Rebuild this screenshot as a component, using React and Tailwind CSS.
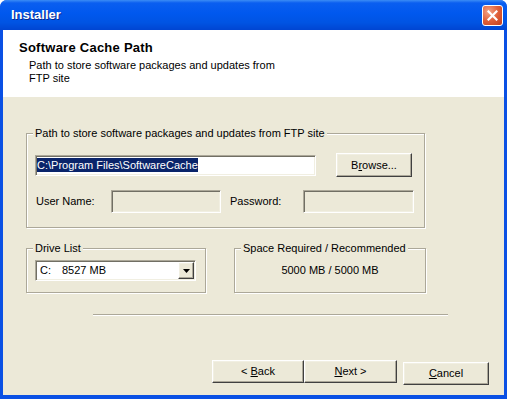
import React from 'react';

const raised =
  'flex items-center justify-center bg-[#ece9d8] border border-t-white border-l-white border-r-[#404040] border-b-[#404040] shadow-[inset_-1px_-1px_0_#aca899,inset_1px_1px_0_#f1efe2]';
const sunken =
  'border border-t-[#aca899] border-l-[#aca899] border-r-white border-b-white shadow-[inset_1px_1px_0_#716f64,inset_-1px_-1px_0_#f1efe2]';

function Group({ label, className = '', children }) {
  return (
    <div className={`relative border border-[#aca899] shadow-[inset_1px_1px_0_white,1px_1px_0_white] ${className}`}>
      <span className="absolute top-[-7px] left-[6px] px-[2px] bg-[#ece9d8] leading-[13px] whitespace-nowrap">
        {label}
      </span>
      {children}
    </div>
  );
}

function CloseButton() {
  return (
    <div className="w-[21px] h-[21px] rounded-[3px] border border-white bg-[radial-gradient(circle_at_30%_30%,#f3a588,#e0603a_50%,#c23e1c)] flex items-center justify-center">
      <svg width="11" height="11" viewBox="0 0 11 11">
        <path d="M1.5 1.5l8 8M9.5 1.5l-8 8" stroke="white" strokeWidth="2.2" strokeLinecap="square" />
      </svg>
    </div>
  );
}

export default function App() {
  return (
    <div className="w-[507px] h-[399px] bg-white font-['Liberation_Sans',Arial,sans-serif] text-[11px] text-black">
      <div className="w-full h-full flex flex-col rounded-t-[7px] bg-[#0a50e4]">
        {/* title bar */}
        <div className="h-[30px] shrink-0 rounded-t-[7px] bg-[linear-gradient(180deg,#3b8cf5_0%,#0a5ef0_10%,#0058ee_45%,#0054e3_75%,#0045d2_100%)] flex items-center justify-between pl-[11px] pr-[4px]">
          <span className="text-white font-bold text-[13px] [text-shadow:1px_1px_0_#0c2a8c]">Installer</span>
          <CloseButton />
        </div>

        <div className="flex-1 flex flex-col mx-[3px] mb-[4px] bg-[#ece9d8]">
          {/* header */}
          <div className="h-[67px] shrink-0 bg-white pl-[16px] pt-[10px]">
            <div className="font-bold text-[13px] leading-[16px] tracking-[0.25px]">Software Cache Path</div>
            <div className="mt-[3px] pl-[10px] leading-[13px]">
              Path to store software packages and updates from
              <br />
              FTP site
            </div>
          </div>

          {/* content */}
          <div className="pl-[23px] pt-[36px]">
            <Group
              label="Path to store software packages and updates from FTP site"
              className="w-[399px] h-[95px] pl-[8px] pt-[19px]"
            >
              <div className="flex items-center">
                <div className={`w-[281px] h-[21px] bg-white pl-[1px] flex items-center ${sunken}`}>
                  <span className="bg-[#0a246a] text-white leading-[14px] whitespace-nowrap">
                    C:\Program Files\SoftwareCache
                  </span>
                </div>
                <div className={`ml-[20px] w-[76px] h-[24px] ${raised}`}>
                  <span>
                    B<u>r</u>owse...
                  </span>
                </div>
              </div>
              <div className="flex items-center mt-[13px]">
                <div className="w-[76px] pl-[1px]">User Name:</div>
                <div className={`w-[110px] h-[23px] ${sunken}`} />
                <div className="w-[82px] pl-[9px]">Password:</div>
                <div className={`w-[111px] h-[23px] ${sunken}`} />
              </div>
            </Group>

            <div className="flex mt-[20px]">
              <Group label="Drive List" className="w-[180px] h-[45px] pl-[8px] pt-[11px]">
                <div className={`w-[161px] h-[21px] bg-white p-[1px] flex items-stretch ${sunken}`}>
                  <div className="flex-1 flex items-center pl-[3px] whitespace-nowrap">
                    <span className="w-[22px]">C:</span>
                    <span>8527 MB</span>
                  </div>
                  <div className={`w-[16px] ${raised}`}>
                    <svg width="7" height="4" viewBox="0 0 7 4">
                      <path d="M0 0h7L3.5 4z" fill="black" />
                    </svg>
                  </div>
                </div>
              </Group>
              <Group
                label="Space Required / Recommended"
                className="ml-[28px] w-[192px] h-[45px] flex items-center justify-center"
              >
                <span>5000 MB / 5000 MB</span>
              </Group>
            </div>

            <div className="ml-[67px] mt-[21px] w-[355px] h-[2px] border-t border-t-[#aca899] border-b border-b-white" />

            <div className="flex items-start mt-[44px] ml-[186px]">
              <div className={`w-[92px] h-[23px] ${raised}`}>
                <span>
                  &lt; <u>B</u>ack
                </span>
              </div>
              <div className={`w-[93px] h-[23px] ${raised}`}>
                <span>
                  <u>N</u>ext &gt;
                </span>
              </div>
              <div className={`ml-[6px] mt-[2px] w-[86px] h-[23px] ${raised}`}>
                <span>
                  <u>C</u>ancel
                </span>
              </div>
            </div>
          </div>
        </div>
      </div>
    </div>
  );
}
